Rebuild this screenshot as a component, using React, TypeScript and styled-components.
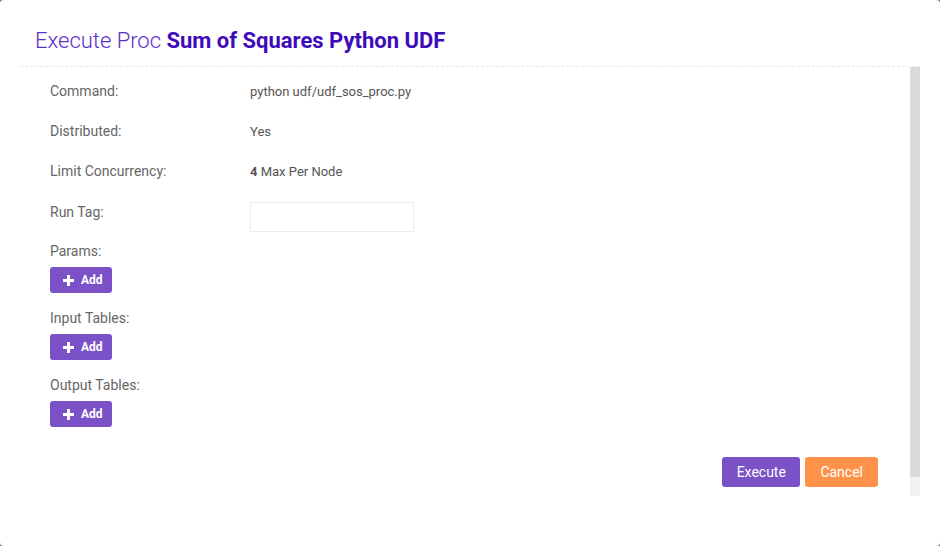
import styled, { createGlobalStyle } from 'styled-components';

const GlobalStyle = createGlobalStyle`
  html, body {
    margin: 0;
    padding: 0;
    background: #8a8a8a;
  }
  * { box-sizing: border-box; }
`;

const Modal = styled.div`
  width: 940px;
  height: 546px;
  background: #fff;
  border-radius: 4px;
  font-family: Roboto, "Liberation Sans", sans-serif;
  display: flex;
  flex-direction: column;
  padding: 0 20px 50px;
`;

const Header = styled.h1`
  margin: 0;
  padding: 28px 15px 12px;
  font-size: 22px;
  line-height: 26px;
  font-weight: 300;
  color: #5a2fcb;
  border-bottom: 1px dashed #e6e6f2;
`;

const Strong = styled.span`
  font-weight: 700;
  color: #3f0bb8;
`;

const Scroller = styled.div`
  flex: 1;
  display: flex;
  min-height: 0;
`;

const Body = styled.div`
  flex: 1;
  overflow: hidden;
  padding: 4px 32px 30px 30px;
`;

const ScrollRail = styled.div`
  width: 10px;
  display: flex;
  flex-direction: column;
  background: #f1f1f1;
`;

const ScrollThumb = styled.div<{ $size: number }>`
  height: ${({ $size }) => $size}%;
  background: #dadada;
`;

const Row = styled.div`
  display: grid;
  grid-template-columns: 200px 1fr;
  align-items: center;
  height: 40px;
`;

const Label = styled.div`
  font-size: 14px;
  line-height: 16px;
  color: #666;
`;

const Value = styled.div`
  font-size: 13px;
  color: #555;

  b {
    font-weight: 700;
  }
`;

const TextInput = styled.input`
  align-self: start;
  width: 164px;
  height: 30px;
  margin-top: 11px;
  border: 1px solid #ebebeb;
  outline: none;
  padding: 0 8px;
  font: inherit;
`;

const Group = styled.div`
  display: flex;
  flex-direction: column;
  align-items: flex-start;
  gap: 8px;
  padding-top: 12px;
  height: 67px;
`;

const AddButton = styled.button`
  display: flex;
  align-items: center;
  gap: 7px;
  width: 62px;
  height: 26px;
  padding: 0 0 0 13px;
  border: none;
  border-radius: 3px;
  background: #7b51c8;
  color: #fff;
  font-family: Roboto, "Liberation Sans", sans-serif;
  font-size: 12px;
  font-weight: 700;
`;

const Footer = styled.div`
  display: flex;
  justify-content: flex-end;
  gap: 5px;
  padding-top: 25px;
`;

const ActionButton = styled.button<{ $tone: 'primary' | 'warn' }>`
  height: 30px;
  padding: 0 ${({ $tone }) => ($tone === 'primary' ? '14.5px' : '15px')};
  border: none;
  border-radius: 3px;
  background: ${({ $tone }) => ($tone === 'primary' ? '#7b51c8' : '#ff924a')};
  color: #fff;
  font-family: Roboto, "Liberation Sans", sans-serif;
  font-size: 14px;
`;

const PlusIcon = () => (
  <svg width="11" height="11" viewBox="0 0 11 11">
    <path d="M5.5 0v11M0 5.5h11" stroke="#fff" strokeWidth="3" />
  </svg>
);

const groups = ['Params:', 'Input Tables:', 'Output Tables:'];

export default function App() {
  return (
    <Modal>
      <GlobalStyle />
      <Header>
        Execute Proc <Strong>Sum of Squares Python UDF</Strong>
      </Header>
      <Scroller>
        <Body>
          <Row>
            <Label>Command:</Label>
            <Value>python udf/udf_sos_proc.py</Value>
          </Row>
          <Row>
            <Label>Distributed:</Label>
            <Value>Yes</Value>
          </Row>
          <Row>
            <Label>Limit Concurrency:</Label>
            <Value>
              <b>4</b> Max Per Node
            </Value>
          </Row>
          <Row>
            <Label>Run Tag:</Label>
            <TextInput />
          </Row>
          {groups.map((g) => (
            <Group key={g}>
              <Label>{g}</Label>
              <AddButton>
                <PlusIcon />
                Add
              </AddButton>
            </Group>
          ))}
          <Footer>
            <ActionButton $tone="primary">Execute</ActionButton>
            <ActionButton $tone="warn">Cancel</ActionButton>
          </Footer>
        </Body>
        <ScrollRail>
          <ScrollThumb $size={95.6} />
        </ScrollRail>
      </Scroller>
    </Modal>
  );
}
